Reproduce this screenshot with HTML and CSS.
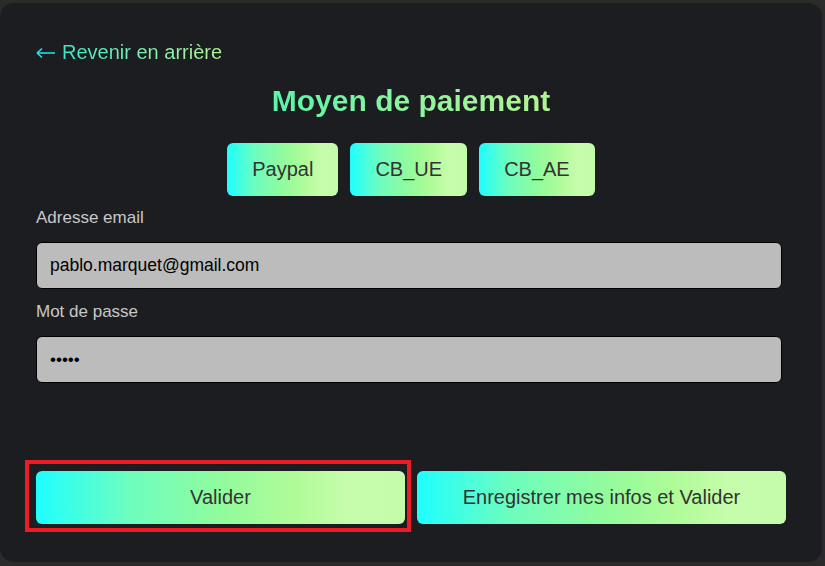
FILE: index.html
```html
<!DOCTYPE html>
<html lang="fr">
<head>
<meta charset="utf-8">
<title>Moyen de paiement</title>
<link rel="stylesheet" href="styles.css">
</head>
<body>
<div class="card">
  <a class="back" href="#"><svg class="arrow" width="20" height="12" viewBox="0 0 20 12"><path d="M1 6H19M1 6L6 1.5M1 6L6 10.5" fill="none" stroke="#22e6e6" stroke-width="1.6"/></svg><span class="back-text">Revenir en arrière</span></a>
  <h1 class="title">Moyen de paiement</h1>
  <div class="methods">
    <button class="grad method">Paypal</button>
    <button class="grad method">CB_UE</button>
    <button class="grad method">CB_AE</button>
  </div>
  <label class="label">Adresse email</label>
  <div class="input">pablo.marquet@gmail.com</div>
  <label class="label">Mot de passe</label>
  <div class="input pwd">•••••</div>
  <div class="actions">
    <div class="highlight-wrap">
      <button class="grad action">Valider</button>
      <span class="highlight"></span>
    </div>
    <button class="grad action">Enregistrer mes infos et Valider</button>
  </div>
</div>
</body>
</html>
```
FILE: styles.css
```css
html, body {
  margin: 0;
  padding: 0;
}
body {
  background: #2b2b2c;
  font-family: "Liberation Sans", Arial, sans-serif;
  width: 825px;
  height: 566px;
  overflow: hidden;
}
.card {
  margin: 3px 0 0 0;
  width: 822px;
  height: 559px;
  box-sizing: border-box;
  background: #1c1d20;
  border-radius: 14px;
  padding: 38px 36px 0 36px;
  display: flex;
  flex-direction: column;
}
.back {
  align-self: flex-start;
  display: flex;
  align-items: center;
  gap: 6px;
  font-size: 20px;
  line-height: 23px;
  text-decoration: none;
}
.arrow {
  display: block;
  margin-top: 1px;
}
.back-text {
  background: linear-gradient(90deg, #3ae8c8 0%, #7aeeb0 45%, #b4f59a 100%);
  -webkit-background-clip: text;
  background-clip: text;
  color: transparent;
}
.title {
  align-self: center;
  margin: 20px 0 0 0;
  font-size: 30px;
  line-height: 34px;
  font-weight: bold;
  background: linear-gradient(90deg, #5af5aa 0%, #8ef59e 50%, #b2f590 100%);
  -webkit-background-clip: text;
  background-clip: text;
  color: transparent;
}
.methods {
  display: flex;
  justify-content: center;
  gap: 12px;
  margin-top: 25px;
}
.grad {
  border: none;
  border-radius: 6px;
  background: linear-gradient(90deg, #1effff 0%, #6dfdbf 25%, #91fb9d 50%, #b0fb98 70%, #c6fdac 85%, #c5fcaa 100%);
  color: #333;
  font-family: "Liberation Sans", Arial, sans-serif;
  font-size: 20px;
  cursor: pointer;
  padding: 0;
}
.method {
  height: 53px;
  padding: 0 25px;
}
.label {
  margin-top: 12px;
  font-size: 17px;
  line-height: 20px;
  color: #c8c8c8;
}
.input {
  margin-top: 14px;
  width: 746px;
  height: 47px;
  box-sizing: border-box;
  background: #bcbcbc;
  border: 1px solid #000;
  border-radius: 6px;
  padding-left: 13px;
  font-size: 17.5px;
  line-height: 45px;
  color: #000;
}
.input + .label {
  margin-top: 13px;
}
.pwd {
  font-size: 17px;
}
.actions {
  display: flex;
  gap: 12px;
  margin-top: 88px;
  margin-right: -4px;
}
.highlight-wrap {
  position: relative;
  display: flex;
}
.action {
  width: 369px;
  height: 53px;
}
.highlight {
  position: absolute;
  left: -11px;
  top: -11px;
  width: 386px;
  height: 72px;
  box-sizing: border-box;
  border: 4px solid #ed1c24;
  pointer-events: none;
}
```
